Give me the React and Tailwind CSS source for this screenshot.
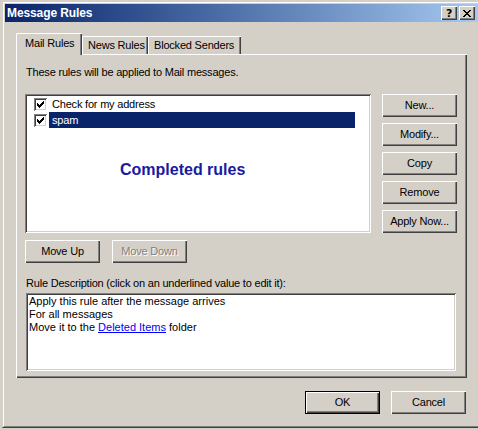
import React from 'react';

const raised =
  'bg-[#d4d0c8] shadow-[inset_1px_1px_0_#ffffff,inset_-1px_-1px_0_#404040,inset_-2px_-2px_0_#808080]';
const sunken =
  'shadow-[inset_1px_1px_0_#808080,inset_-1px_-1px_0_#ffffff,inset_2px_2px_0_#404040,inset_-2px_-2px_0_#d4d0c8]';

// 7x7 check glyph, one column at a time: [top row, height]
const CHECK = [[2, 3], [3, 3], [4, 3], [3, 3], [2, 3], [1, 3], [0, 3]];

function CheckBox() {
  return (
    <svg width="13" height="13" viewBox="0 0 13 13" className="shrink-0">
      <rect x="0" y="0" width="13" height="13" fill="#808080" />
      <rect x="1" y="1" width="12" height="12" fill="#ffffff" />
      <rect x="1" y="1" width="11" height="11" fill="#404040" />
      <rect x="2" y="2" width="10" height="10" fill="#d4d0c8" />
      <rect x="2" y="2" width="9" height="9" fill="#ffffff" />
      {CHECK.map(([top, h], i) => (
        <rect key={i} x={3 + i} y={3 + top} width="1" height={h} fill="#000000" />
      ))}
    </svg>
  );
}

// caption close glyph, pixel rows
const CLOSE = ['XX....XX', '.XX..XX.', '..XXXX..', '...XX...', '..XXXX..', '.XX..XX.', 'XX....XX'];

function CaptionButton({ children }) {
  return (
    <div className={`w-[16px] h-[14px] flex items-center justify-center ${raised}`}>{children}</div>
  );
}

function Button({ children, disabled = false, isDefault = false, className = '' }) {
  const face = (
    <div
      className={`h-full w-full flex items-center justify-center ${raised} ${
        disabled ? 'text-[#808080] [text-shadow:1px_1px_0_#ffffff]' : 'text-black'
      }`}
    >
      {children}
    </div>
  );
  if (isDefault) {
    return <div className={`w-[75px] h-[23px] border border-black ${className}`}>{face}</div>;
  }
  return <div className={`w-[75px] h-[23px] ${className}`}>{face}</div>;
}

function Tab({ label, selected, width }) {
  if (selected) {
    return (
      <div
        className="relative z-10 h-[22px] -mb-[1px] bg-[#d4d0c8] border-t border-l border-white shadow-[inset_-1px_0_0_#404040,inset_-2px_0_0_#808080] rounded-tl-[2px] pl-[8px] pt-[3px] leading-[13px]"
        style={{ width }}
      >
        {label}
      </div>
    );
  }
  return (
    <div
      className="h-[18px] bg-[#d4d0c8] border-t border-l border-white shadow-[inset_-1px_0_0_#404040,inset_-2px_0_0_#808080] rounded-tl-[2px] pl-[5px] pt-[2px] leading-[13px]"
      style={{ width }}
    >
      {label}
    </div>
  );
}

const rules = [
  { name: 'Check for my address', checked: true },
  { name: 'spam', checked: true, selected: true },
];

export default function App() {
  return (
    <div className="w-[478px] h-[430px] overflow-hidden bg-[#d4d0c8] pt-[1px] pl-[2px] font-['Liberation_Sans',Arial,sans-serif] text-[11px] tracking-[-0.2px] text-black">
      {/* dialog frame */}
      <div className="w-[480px] h-[427px] border-t border-l border-[#d4d0c8] border-r border-b border-r-[#404040] border-b-[#404040]">
        <div className="h-full border-t border-l border-white border-r border-b border-r-[#808080] border-b-[#808080] p-[1px]">
          {/* title bar */}
          <div className="h-[18px] flex items-center justify-between bg-gradient-to-r from-[#0a246a] to-[#a6caf0] pl-[2px] pr-[4px]">
            <span className="text-white font-bold text-[12px] leading-[14px] tracking-[-0.1px]">Message Rules</span>
            <div className="flex gap-[2px]">
              <CaptionButton>
                <span className="font-bold text-[11px] leading-[11px] font-['DejaVu_Sans',sans-serif]">?</span>
              </CaptionButton>
              <CaptionButton>
                <svg width="8" height="7" viewBox="0 0 8 7">
                  {CLOSE.map((row, y) =>
                    row.split('').map((c, x) =>
                      c === 'X' ? <rect key={`${x}-${y}`} x={x} y={y} width="1" height="1" fill="#000" /> : null
                    )
                  )}
                </svg>
              </CaptionButton>
            </div>
          </div>

          {/* body */}
          <div className="pl-[11px] pt-[11px]">
            {/* tabs */}
            <div className="flex items-end h-[21px]">
              <Tab label="Mail Rules" selected width={66} />
              <Tab label="News Rules" width={66} />
              <Tab label="Blocked Senders" width={93} />
            </div>

            {/* tab panel */}
            <div className={`w-[451px] h-[324px] px-[9px] ${raised}`}>
              <div className="pt-[12px] pl-[1px] h-[25px] leading-[13px]">
                These rules will be applied to Mail messages.
              </div>

              <div className="mt-[15px] flex gap-[11px]">
                {/* rule list */}
                <div className={`w-[346px] h-[139px] bg-white p-[2px] ${sunken}`}>
                  {rules.map((r) => (
                    <div key={r.name} className="h-[16px] flex items-center">
                      <div className="w-[22px] pl-[7px] flex items-center">
                        <CheckBox />
                      </div>
                      <div
                        className={`h-[16px] flex items-center pl-[3px] leading-[13px] ${
                          r.selected ? 'bg-[#0a246a] text-white w-[306px]' : ''
                        }`}
                      >
                        {r.name}
                      </div>
                    </div>
                  ))}
                  <div className="pt-[33px] pl-[93px] text-[16px] font-bold leading-[18px] tracking-normal text-[#1a1aa0]">
                    Completed rules
                  </div>
                </div>

                <div className="flex flex-col gap-[6px]">
                  <Button>New...</Button>
                  <Button>Modify...</Button>
                  <Button>Copy</Button>
                  <Button>Remove</Button>
                  <Button>Apply Now...</Button>
                </div>
              </div>

              <div className="mt-[7px] flex gap-[12px]">
                <Button>Move Up</Button>
                <Button disabled>Move Down</Button>
              </div>

              <div className="mt-[14px] pl-[1px] h-[13px] leading-[13px]">
                Rule Description (click on an underlined value to edit it):
              </div>

              <div
                className={`mt-[3px] ml-[1px] w-[430px] h-[78px] bg-white p-[2px] pl-[3px] leading-[13px] tracking-normal ${sunken}`}
              >
                <div>Apply this rule after the message arrives</div>
                <div>For all messages</div>
                <div>
                  Move it to the <span className="text-[#0000ff] underline">Deleted Items</span> folder
                </div>
              </div>
            </div>

            {/* dialog buttons */}
            <div className="w-[451px] mt-[13px] flex justify-end gap-[11px] pr-[1px]">
              <Button isDefault>OK</Button>
              <Button>Cancel</Button>
            </div>
          </div>
        </div>
      </div>
    </div>
  );
}
